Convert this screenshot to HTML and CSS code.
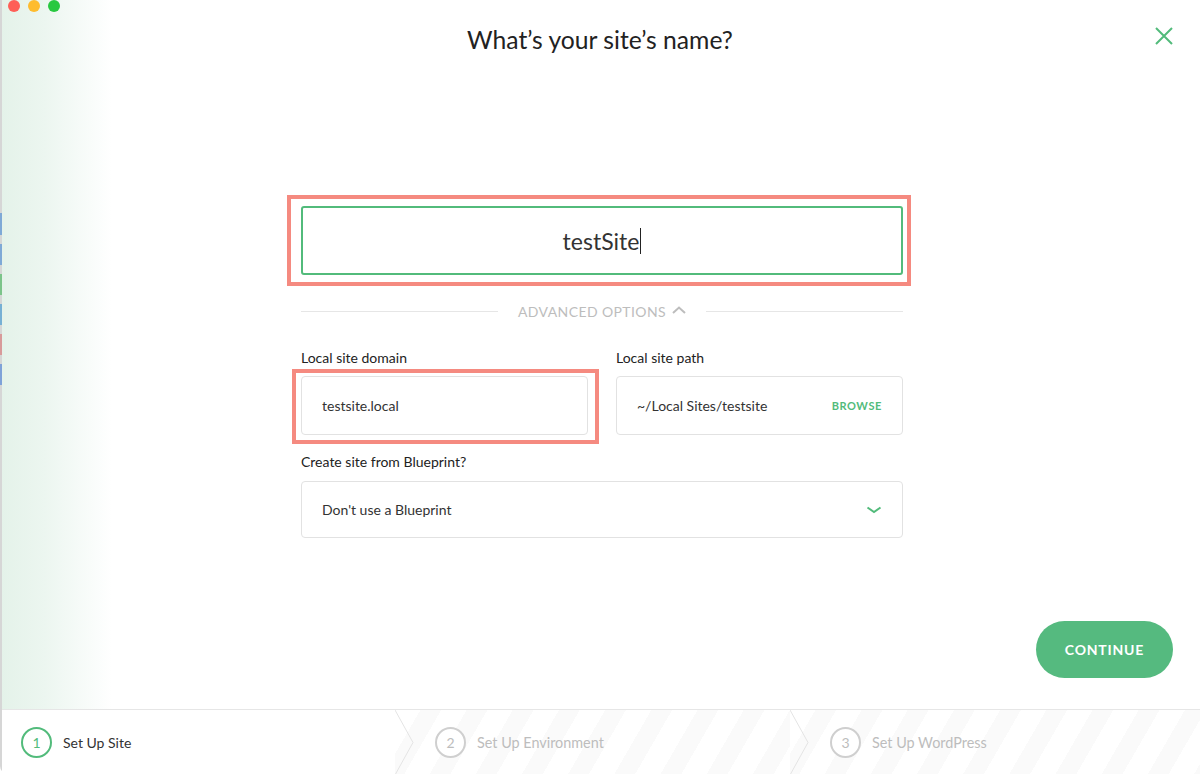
FILE: index.html
```html
<!DOCTYPE html>
<html>
<head>
<meta charset="utf-8">
<link rel="stylesheet" href="styles.css">
</head>
<body>
<div class="window">
  <div class="edge"></div>
  <main class="main">
    <div class="lights">
      <span class="light red"></span>
      <span class="light yellow"></span>
      <span class="light green"></span>
    </div>
    <button class="close" aria-label="Close">
      <svg width="20" height="20" viewBox="0 0 20 20"><path d="M2 2 L18 18 M18 2 L2 18" stroke="#52bb7b" stroke-width="2" fill="none"/></svg>
    </button>
    <h1 class="title">What’s your site’s name?</h1>
    <div class="form">
      <div class="name-field highlight-name">
        <span class="name-text">testSite</span><span class="caret"></span>
      </div>
      <div class="advanced">
        <span class="rule"></span>
        <span class="adv-label">ADVANCED OPTIONS
          <svg width="14" height="8" viewBox="0 0 14 8"><path d="M1 7 L7 1.5 L13 7" stroke="#bdbdbd" stroke-width="2" fill="none"/></svg>
        </span>
        <span class="rule"></span>
      </div>
      <div class="fields">
        <div class="field">
          <div class="label">Local site domain</div>
          <div class="box highlight-domain"><span>testsite.local</span></div>
        </div>
        <div class="field">
          <div class="label">Local site path</div>
          <div class="box"><span>~/Local Sites/testsite</span><span class="browse">BROWSE</span></div>
        </div>
      </div>
      <div class="label bp-label">Create site from Blueprint?</div>
      <div class="box select">
        <span>Don't use a Blueprint</span>
        <svg width="16" height="8" viewBox="0 0 16 8"><path d="M1.5 1.5 L8 6 L14.5 1.5" stroke="#52bb7b" stroke-width="2" fill="none"/></svg>
      </div>
    </div>
    <div class="actions">
      <button class="continue">CONTINUE</button>
    </div>
  </main>
  <footer class="steps">
    <div class="step step-1">
      <span class="num active">1</span><span class="step-text active">Set Up Site</span>
    </div>
    <div class="step step-2">
      <svg class="chev" width="20" height="65" viewBox="0 0 20 65"><path d="M0 0 L18 32.5 L0 65" stroke="#e4e4e4" stroke-width="1" fill="none"/></svg>
      <span class="num">2</span><span class="step-text">Set Up Environment</span>
    </div>
    <div class="step step-3">
      <svg class="chev" width="20" height="65" viewBox="0 0 20 65"><path d="M0 0 L18 32.5 L0 65" stroke="#e4e4e4" stroke-width="1" fill="none"/></svg>
      <span class="num">3</span><span class="step-text">Set Up WordPress</span>
    </div>
  </footer>
</div>
</body>
</html>
```
FILE: styles.css
```css
* { box-sizing: border-box; }
html, body { margin: 0; padding: 0; }
body {
  width: 1200px;
  height: 774px;
  overflow: hidden;
  background: #fff;
  font-family: Lato, "Open Sans", "Liberation Sans", sans-serif;
  color: #222;
}
.window {
  position: relative;
  width: 1200px;
  height: 774px;
  display: flex;
  flex-direction: column;
  border-bottom-left-radius: 8px;
  overflow: hidden;
}
.edge {
  position: absolute;
  left: 0; top: 0; bottom: 0;
  width: 2px;
  z-index: 2;
  background: linear-gradient(to bottom,
    #d6d6d6 0, #d6d6d6 213px,
    #7fa9d6 213px, #7fa9d6 235px, #d6d6d6 235px, #d6d6d6 244px,
    #7fa9d6 244px, #7fa9d6 265px, #d6d6d6 265px, #d6d6d6 274px,
    #7cc48a 274px, #7cc48a 295px, #d6d6d6 295px, #d6d6d6 304px,
    #77b0d4 304px, #77b0d4 325px, #d6d6d6 325px, #d6d6d6 334px,
    #d89a9a 334px, #d89a9a 355px, #d6d6d6 355px, #d6d6d6 364px,
    #7fa2d8 364px, #7fa2d8 385px, #d6d6d6 385px, #d6d6d6 100%);
}
.main {
  position: relative;
  height: 709px;
  display: flex;
  flex-direction: column;
  background: linear-gradient(to right, #e4f2e9 0, #ecf6f0 45px, #ffffff 112px);
}
.lights {
  position: absolute;
  left: 8px; top: 0;
  display: flex;
  gap: 8px;
}
.light {
  width: 12px; height: 12px;
  border-radius: 50%;
}
.light.red { background: #fe5f57; }
.light.yellow { background: #febc2e; }
.light.green { background: #28c840; }
.close {
  position: absolute;
  right: 26px; top: 26px;
  border: 0; background: none; padding: 0;
  width: 20px; height: 20px;
}
.close svg { display: block; }
.title {
  margin: 25px 0 0;
  font-size: 24.7px;
  line-height: 30px;
  font-weight: 400;
  text-align: center;
  color: #222;
}
.form {
  width: 602px;
  margin: 151px 0 0 301px;
}
.name-field {
  position: relative;
  height: 69px;
  border: 2px solid #52bb7b;
  border-radius: 3px;
  background: #fff;
  display: flex;
  align-items: center;
  justify-content: center;
  font-size: 23px;
  color: #333;
}
.caret {
  width: 1px; height: 26px;
  background: #222;
  margin-left: 1px;
}
.highlight-name::after {
  content: "";
  position: absolute;
  top: -13px; left: -16px; right: -10px; bottom: -13px;
  border: 4px solid #f58a80;
}
.advanced {
  margin-top: 26px;
  height: 20px;
  display: flex;
  align-items: center;
  gap: 20px;
}
.rule { flex: 1; height: 1px; background: #e6e6e6; }
.adv-label {
  font-size: 14px;
  color: #bdbdbd;
  letter-spacing: 0.4px;
  display: flex;
  align-items: center;
  gap: 6px;
}
.adv-label svg { margin-top: -2px; }
.fields {
  margin-top: 28px;
  display: flex;
  gap: 28px;
}
.field { width: 287px; }
.label {
  font-size: 14px;
  line-height: 18px;
  color: #222;
  margin-bottom: 9px;
}
.box {
  position: relative;
  height: 59px;
  border: 1px solid #e2e2e2;
  border-radius: 4px;
  background: #fff;
  display: flex;
  align-items: center;
  justify-content: space-between;
  padding: 0 20px;
  font-size: 14px;
  color: #333;
}
.browse {
  font-size: 11px;
  font-weight: 700;
  letter-spacing: 0.6px;
  color: #52bb7b;
}
.highlight-domain::after {
  content: "";
  position: absolute;
  top: -8px; left: -10px; right: -12px; bottom: -10px;
  border: 4px solid #f58a80;
}
.bp-label { margin-top: 18px; margin-bottom: 10px; }
.select { height: 57px; padding-right: 20px; }
.actions {
  margin-top: auto;
  display: flex;
  justify-content: flex-end;
  padding: 0 27px 31px 0;
}
.continue {
  width: 137px;
  height: 57px;
  border: 0;
  border-radius: 29px;
  background: #55ba7f;
  color: #fff;
  font-family: Lato, "Open Sans", "Liberation Sans", sans-serif;
  font-size: 14px;
  font-weight: 700;
  letter-spacing: 0.8px;
}
.steps {
  height: 65px;
  border-top: 1px solid #e6e6e6;
  display: flex;
  background: #fff;
}
.step {
  display: flex;
  align-items: center;
  height: 100%;
}
.step-1 { width: 395px; padding-left: 21px; }
.step-2, .step-3 {
  background: repeating-linear-gradient(120deg, #ffffff 0, #ffffff 22px, #fafafa 22px, #fafafa 40px);
}
.step-2 { width: 395px; }
.step-3 { flex: 1; }
.chev { flex: none; margin-right: 20px; display: block; }
.num {
  width: 31px; height: 31px;
  border-radius: 50%;
  border: 2px solid #cfcfcf;
  display: flex;
  align-items: center;
  justify-content: center;
  font-size: 14px;
  color: #bdbdbd;
  background: #fff;
  margin-right: 11px;
}
.num.active { border-color: #52bb7b; color: #52bb7b; }
.step-text { font-size: 14.4px; color: #bdbdbd; }
.step-text.active { color: #333; font-size: 14px; }
```
